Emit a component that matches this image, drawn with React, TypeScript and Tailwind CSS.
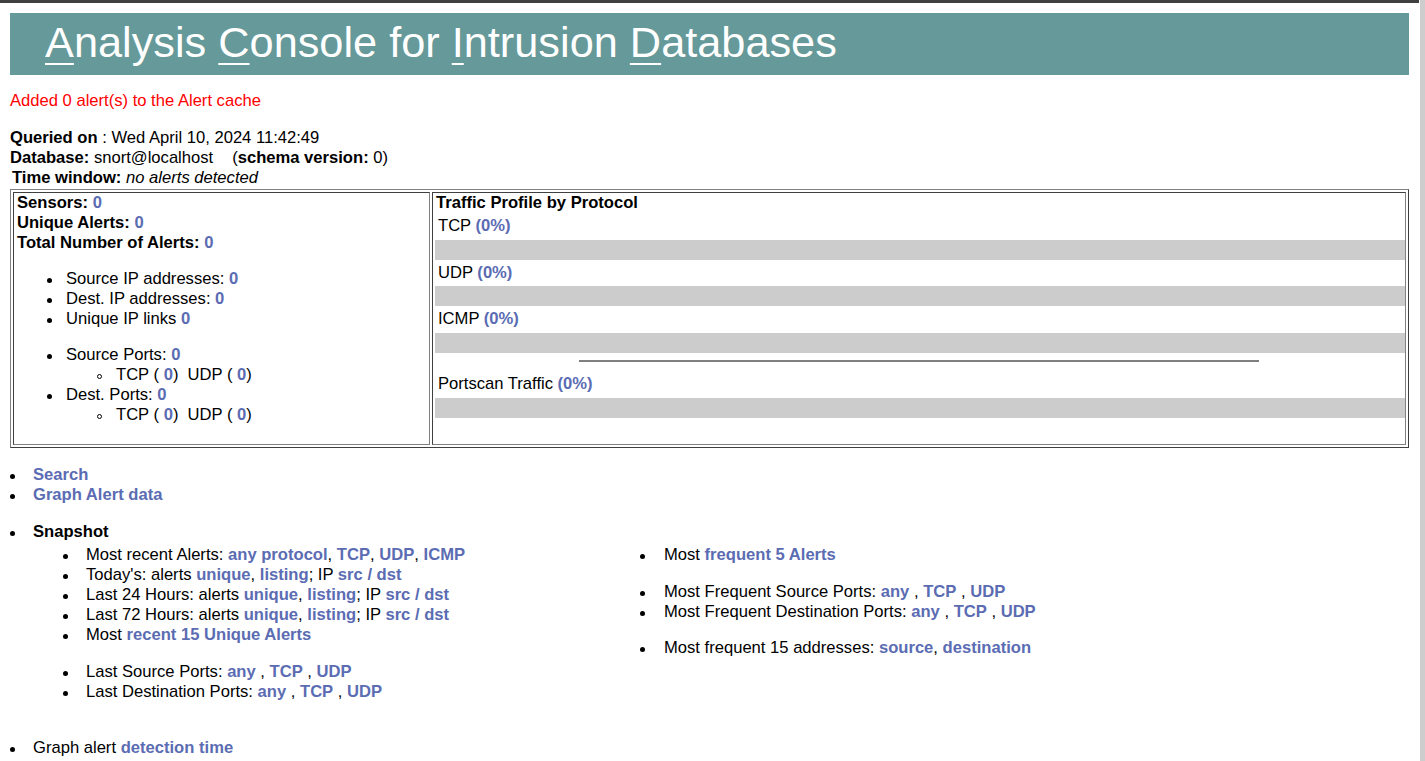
import React from "react";

function L({ children }: { children: React.ReactNode }) {
  return <span className="font-bold text-[#5b6cb3]">{children}</span>;
}

function U({ children }: { children: React.ReactNode }) {
  return <span className="underline decoration-[2px] underline-offset-[6px]">{children}</span>;
}

function Disc({ className }: { className: string }) {
  return <span className={"mt-[2px] h-[5px] w-[5px] shrink-0 rounded-full bg-black " + className} />;
}

function Circle({ className }: { className: string }) {
  return <span className={"mt-[2px] h-[5px] w-[5px] shrink-0 rounded-full border border-black bg-white " + className} />;
}

function Row({ children }: { children: React.ReactNode }) {
  return <div className="flex h-[20px] items-center whitespace-nowrap">{children}</div>;
}

function Bar() {
  return <div className="ml-[2px] h-[20px] bg-[#cccccc]" />;
}

export default function App() {
  return (
    <div className="flex min-h-screen bg-white font-['Liberation_Sans',Arial,sans-serif] text-[16.6px] leading-[20px] text-black">
      <div className="w-[1419px] shrink-0">
        <div className="h-[3px] bg-[#404040]" />
        <div className="px-[10px]">
          <div className="mt-[10px] h-[62px] whitespace-nowrap bg-[#669999] pl-[35px] pt-[5px] text-[43.3px] leading-[49px] text-white">
            <U>A</U>nalysis <U>C</U>onsole for <U>I</U>ntrusion <U>D</U>atabases
          </div>

          <div className="mt-[16px] text-[#ff0000]">Added 0 alert(s) to the Alert cache</div>

          <div className="mt-[17px]">
            <div>
              <b>Queried on</b> : Wed April 10, 2024 11:42:49
            </div>
            <div>
              <b>Database:</b> snort@localhost
              <span className="pl-[19px]">
                (<b>schema version:</b> 0)
              </span>
            </div>
            <div className="pl-[2px]">
              <b>Time window:</b> <i>no alerts detected</i>
            </div>
          </div>

          <div className="mt-[1px] flex gap-[2px] border border-b-[#404040] border-l-[#808080] border-r-[#404040] border-t-[#808080] p-[2px]">
            <div className="h-[253px] w-[417px] shrink-0 border border-b-[#808080] border-l-[#404040] border-r-[#808080] border-t-[#404040] pl-[3px]">
              <div className="font-bold">
                Sensors: <L>0</L>
              </div>
              <div className="font-bold">
                Unique Alerts: <L>0</L>
              </div>
              <div className="font-bold">
                Total Number of Alerts: <L>0</L>
              </div>
              <div className="mt-[16px]">
                <Row>
                  <Disc className="ml-[30px]" />
                  <span className="ml-[14px]">
                    Source IP addresses: <L>0</L>
                  </span>
                </Row>
                <Row>
                  <Disc className="ml-[30px]" />
                  <span className="ml-[14px]">
                    Dest. IP addresses: <L>0</L>
                  </span>
                </Row>
                <Row>
                  <Disc className="ml-[30px]" />
                  <span className="ml-[14px]">
                    Unique IP links <L>0</L>
                  </span>
                </Row>
              </div>
              <div className="mt-[16px]">
                <Row>
                  <Disc className="ml-[30px]" />
                  <span className="ml-[14px]">
                    Source Ports: <L>0</L>
                  </span>
                </Row>
                <Row>
                  <Circle className="ml-[80px]" />
                  <span className="ml-[14px]">
                    TCP ( <L>0</L>)&nbsp;&nbsp;UDP ( <L>0</L>)
                  </span>
                </Row>
                <Row>
                  <Disc className="ml-[30px]" />
                  <span className="ml-[14px]">
                    Dest. Ports: <L>0</L>
                  </span>
                </Row>
                <Row>
                  <Circle className="ml-[80px]" />
                  <span className="ml-[14px]">
                    TCP ( <L>0</L>)&nbsp;&nbsp;UDP ( <L>0</L>)
                  </span>
                </Row>
              </div>
            </div>

            <div className="h-[253px] min-w-0 flex-1 border border-b-[#808080] border-l-[#404040] border-r-[#808080] border-t-[#404040]">
              <div className="pl-[3px] font-bold">Traffic Profile by Protocol</div>
              <div className="mt-[3px] pl-[5px]">
                TCP <L>(0%)</L>
              </div>
              <div className="mt-[4px]">
                <Bar />
              </div>
              <div className="mt-[3px] pl-[5px]">
                UDP <L>(0%)</L>
              </div>
              <div className="mt-[3px]">
                <Bar />
              </div>
              <div className="mt-[3px] pl-[5px]">
                ICMP <L>(0%)</L>
              </div>
              <div className="mt-[4px]">
                <Bar />
              </div>
              <div className="mx-auto mt-[7px] h-[2px] w-[70%] bg-[#808080]" />
              <div className="mt-[12px] pl-[5px]">
                Portscan Traffic <L>(0%)</L>
              </div>
              <div className="mt-[4px]">
                <Bar />
              </div>
            </div>
          </div>

          <div className="mt-[17px]">
            <Row>
              <Disc className="" />
              <span className="ml-[18px]">
                <L>Search</L>
              </span>
            </Row>
            <Row>
              <Disc className="" />
              <span className="ml-[18px]">
                <L>Graph Alert data</L>
              </span>
            </Row>
          </div>

          <div className="mt-[17px]">
            <Row>
              <Disc className="" />
              <span className="ml-[18px] font-bold">Snapshot</span>
            </Row>
          </div>

          <div className="mt-[3px] flex">
            <div className="w-[630px] shrink-0">
              <Row>
                <Disc className="ml-[53px]" />
                <span className="ml-[18px]">
                  Most recent Alerts: <L>any protocol</L>, <L>TCP</L>, <L>UDP</L>, <L>ICMP</L>
                </span>
              </Row>
              <Row>
                <Disc className="ml-[53px]" />
                <span className="ml-[18px]">
                  Today's: alerts <L>unique</L>, <L>listing</L>; IP <L>src / dst</L>
                </span>
              </Row>
              <Row>
                <Disc className="ml-[53px]" />
                <span className="ml-[18px]">
                  Last 24 Hours: alerts <L>unique</L>, <L>listing</L>; IP <L>src / dst</L>
                </span>
              </Row>
              <Row>
                <Disc className="ml-[53px]" />
                <span className="ml-[18px]">
                  Last 72 Hours: alerts <L>unique</L>, <L>listing</L>; IP <L>src / dst</L>
                </span>
              </Row>
              <Row>
                <Disc className="ml-[53px]" />
                <span className="ml-[18px]">
                  Most <L>recent 15 Unique Alerts</L>
                </span>
              </Row>
              <div className="mt-[17px]">
                <Row>
                  <Disc className="ml-[53px]" />
                  <span className="ml-[18px]">
                    Last Source Ports: <L>any</L> , <L>TCP</L> , <L>UDP</L>
                  </span>
                </Row>
                <Row>
                  <Disc className="ml-[53px]" />
                  <span className="ml-[18px]">
                    Last Destination Ports: <L>any</L> , <L>TCP</L> , <L>UDP</L>
                  </span>
                </Row>
              </div>
            </div>

            <div className="flex-1">
              <Row>
                <Disc className="" />
                <span className="ml-[19px]">
                  Most <L>frequent 5 Alerts</L>
                </span>
              </Row>
              <div className="mt-[17px]">
                <Row>
                  <Disc className="" />
                  <span className="ml-[19px]">
                    Most Frequent Source Ports: <L>any</L> , <L>TCP</L> , <L>UDP</L>
                  </span>
                </Row>
                <Row>
                  <Disc className="" />
                  <span className="ml-[19px]">
                    Most Frequent Destination Ports: <L>any</L> , <L>TCP</L> , <L>UDP</L>
                  </span>
                </Row>
              </div>
              <div className="mt-[16px]">
                <Row>
                  <Disc className="" />
                  <span className="ml-[19px]">
                    Most frequent 15 addresses: <L>source</L>, <L>destination</L>
                  </span>
                </Row>
              </div>
            </div>
          </div>

          <div className="mt-[36px]">
            <Row>
              <Disc className="" />
              <span className="ml-[18px]">
                Graph alert <L>detection time</L>
              </span>
            </Row>
          </div>
        </div>
      </div>
      <div className="w-[1px] shrink-0 bg-white" />
      <div className="flex-1 bg-[#cdcdcd]" />
    </div>
  );
}
